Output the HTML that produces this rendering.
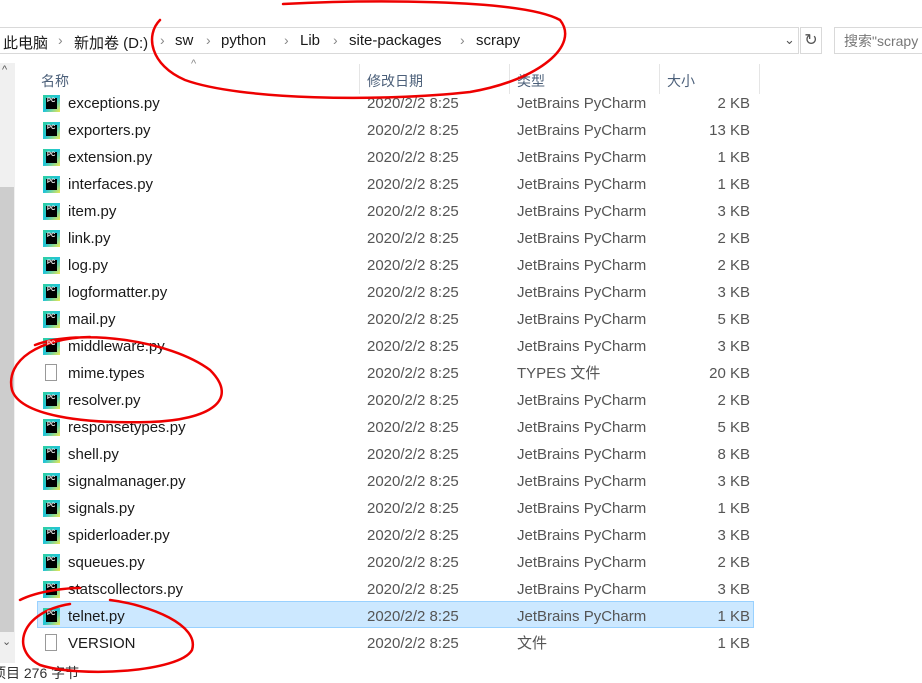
<!DOCTYPE html>
<html><head><meta charset="utf-8"><style>
body{margin:0;width:922px;height:678px;overflow:hidden;background:#fff;font-family:"Liberation Sans","Noto Sans CJK SC",sans-serif;position:relative;color:#000}
.abs{position:absolute}
.addr{left:-1px;top:27px;width:800px;height:27px;border:1px solid #d9d9d9;box-sizing:border-box}
.crumb{top:32px;font-size:15px;color:#1a1a1a;white-space:nowrap}
.sep{top:32px;font-size:14px;color:#888}
.hdr{top:71px;font-size:14px;color:#4c607a}
.row{position:absolute;left:37px;width:717px;height:27px;font-size:15px;line-height:27px;color:#1a1a1a}
.row span{position:absolute;top:0;white-space:nowrap}
.ic{position:absolute;left:6px;top:5px;width:17px;height:17px;background:linear-gradient(135deg,#2fd0a0,#21c4d8 50%,#f2e94c);}
.ic:after{content:"";position:absolute;left:3px;top:3px;width:11px;height:11px;background:#000}
.ic i{position:absolute;left:4px;top:3px;font-size:6px;line-height:7px;color:#fff;font-style:normal;z-index:1;font-weight:bold}
.doc{position:absolute;left:8px;top:4px;width:12px;height:17px;border:1px solid #999;box-sizing:border-box;background:#fff}
.dt{left:330px;color:#555}.ty{left:480px;color:#555}.sz{right:4px;color:#555}
</style></head><body>
<div class="abs addr"></div>
<div class="abs crumb" style="left:3px">此电脑</div>
<div class="abs sep" style="left:58px">›</div>
<div class="abs crumb" style="left:74px">新加卷 (D:)</div>
<div class="abs sep" style="left:160px">›</div>
<div class="abs crumb" style="left:175px">sw</div>
<div class="abs sep" style="left:206px">›</div>
<div class="abs crumb" style="left:221px">python</div>
<div class="abs sep" style="left:284px">›</div>
<div class="abs crumb" style="left:300px">Lib</div>
<div class="abs sep" style="left:333px">›</div>
<div class="abs crumb" style="left:349px">site-packages</div>
<div class="abs sep" style="left:460px">›</div>
<div class="abs crumb" style="left:476px">scrapy</div>
<div class="abs" style="left:784px;top:32px;font-size:13px;color:#555">⌄</div>
<div class="abs" style="left:800px;top:27px;width:22px;height:27px;border:1px solid #d9d9d9;box-sizing:border-box;font-size:16px;color:#555;text-align:center;line-height:25px">↻</div>
<div class="abs" style="left:834px;top:27px;width:100px;height:27px;border:1px solid #d9d9d9;box-sizing:border-box;font-size:14px;color:#777;line-height:27px;padding-left:9px;white-space:nowrap">搜索"scrapy</div>
<div class="abs" style="left:191px;top:58px;font-size:11px;color:#888">^</div>
<div class="abs" style="left:0;top:63px;width:15px;height:600px;background:#f0f0f0"></div>
<div class="abs" style="left:0;top:187px;width:14px;height:445px;background:#cdcdcd"></div>
<div class="abs" style="left:2px;top:64px;font-size:11px;color:#555">^</div>
<div class="abs" style="left:2px;top:635px;font-size:11px;color:#555">⌄</div>
<div class="abs" style="left:359px;top:64px;width:1px;height:30px;background:#e5e5e5"></div>
<div class="abs" style="left:509px;top:64px;width:1px;height:30px;background:#e5e5e5"></div>
<div class="abs" style="left:659px;top:64px;width:1px;height:30px;background:#e5e5e5"></div>
<div class="abs" style="left:759px;top:64px;width:1px;height:30px;background:#e5e5e5"></div>
<div class="abs hdr" style="left:41px">名称</div>
<div class="abs hdr" style="left:367px">修改日期</div>
<div class="abs hdr" style="left:517px">类型</div>
<div class="abs hdr" style="left:667px">大小</div>
<div class="row" style="top:601px;background:#cce8ff;border:1px solid #99d1ff;box-sizing:border-box"></div>
<div id="rows"></div>
<script>
var d=[["exceptions.py",2],["exporters.py",13],["extension.py",1],["interfaces.py",1],["item.py",3],["link.py",2],["log.py",2],["logformatter.py",3],["mail.py",5],["middleware.py",3],["mime.types",20,"TYPES 文件"],["resolver.py",2],["responsetypes.py",5],["shell.py",8],["signalmanager.py",3],["signals.py",1],["spiderloader.py",3],["squeues.py",2],["statscollectors.py",3],["telnet.py",1],["VERSION",1,"文件"]];
var h="";d.forEach(function(r,i){var ic=r[2]?'<div class="doc"></div>':'<div class="ic"><i>PC</i></div>';
h+='<div class="row" style="top:'+(90+27*i)+'px">'+ic+'<span style="left:31px">'+r[0]+'</span><span class="dt">2020/2/2 8:25</span><span class="ty">'+(r[2]||"JetBrains PyCharm")+'</span><span class="sz">'+r[1]+' KB</span></div>';});
document.getElementById("rows").innerHTML=h;
</script>
<div class="abs" style="left:-8px;top:663px;font-size:14px;color:#333;white-space:nowrap">项目 276 字节</div>
<svg class="abs" style="left:0;top:0" width="922" height="678">
<g fill="none" stroke="#e00" stroke-width="2.5" stroke-linecap="round">
<path d="M283 4 C360 0 520 -2 560 20 C580 45 540 80 470 92 C380 102 240 100 185 80 C150 65 145 35 160 20"/>
<path d="M35 345 C80 328 170 340 210 370 C240 400 210 420 150 422 C80 424 20 415 12 390 C5 360 40 338 90 337"/>
<path d="M20 600 C40 590 70 588 80 588 M70 604 C20 612 10 650 40 665 C80 678 180 672 192 650 C200 625 150 605 110 600"/>
</g></svg>
</body></html>
